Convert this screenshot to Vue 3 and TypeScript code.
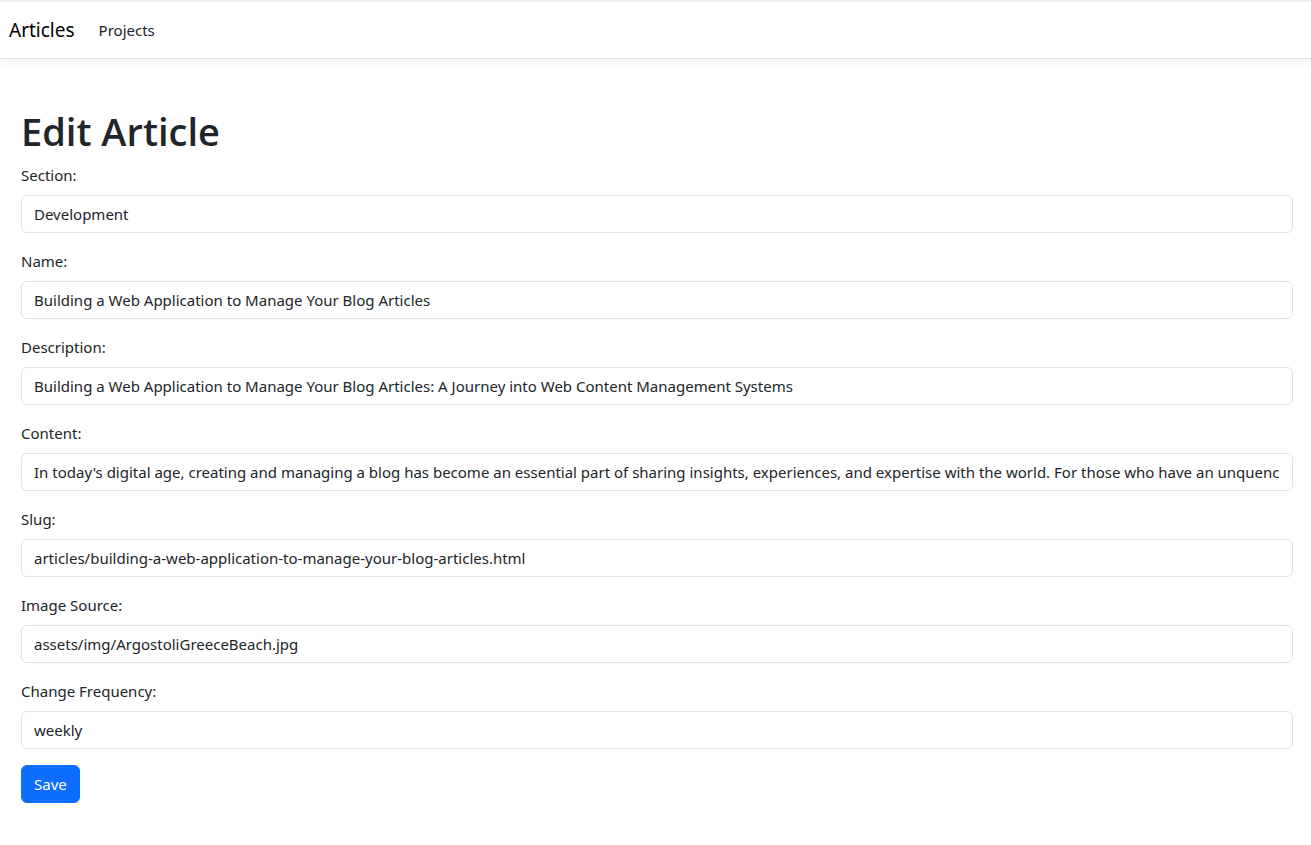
<script setup lang="ts">
import { ref } from 'vue'

interface Field {
  id: string
  label: string
  value: string
}

const fields = ref<Field[]>([
  { id: 'section', label: 'Section:', value: 'Development' },
  { id: 'name', label: 'Name:', value: 'Building a Web Application to Manage Your Blog Articles' },
  {
    id: 'description',
    label: 'Description:',
    value: 'Building a Web Application to Manage Your Blog Articles: A Journey into Web Content Management Systems',
  },
  {
    id: 'content',
    label: 'Content:',
    value:
      "In today's digital age, creating and managing a blog has become an essential part of sharing insights, experiences, and expertise with the world. For those who have an unquenchable",
  },
  { id: 'slug', label: 'Slug:', value: 'articles/building-a-web-application-to-manage-your-blog-articles.html' },
  { id: 'image', label: 'Image Source:', value: 'assets/img/ArgostoliGreeceBeach.jpg' },
  { id: 'frequency', label: 'Change Frequency:', value: 'weekly' },
])
</script>

<template>
  <header class="header">
    <nav class="navbar">
      <a class="brand" href="#">Articles</a>
      <a class="nav-link" href="#">Projects</a>
    </nav>
  </header>
  <main class="content">
    <h1 class="title">Edit Article</h1>
    <form class="form" @submit.prevent>
      <div v-for="field in fields" :key="field.id" class="group">
        <label class="label" :for="field.id">{{ field.label }}</label>
        <input :id="field.id" v-model="field.value" class="control" type="text" />
      </div>
      <button class="save" type="submit">Save</button>
    </form>
  </main>
</template>

<style>
body {
  margin: 0;
  background: #fff;
}
</style>

<style scoped>
.header,
.content {
  font-family: "Segoe UI", "Noto Sans", "Open Sans", sans-serif;
  font-size: 15px;
  line-height: 24px;
  color: #212529;
}
.header {
  border-top: 2px solid #ececec;
  border-bottom: 1px solid #dee0e2;
  box-shadow: 0 4px 12px rgba(0, 0, 0, 0.05);
}
.navbar {
  display: flex;
  align-items: center;
  gap: 24px;
  height: 56px;
  padding: 0 9px;
}
.brand {
  font-size: 19px;
  color: #000;
  text-decoration: none;
}
.nav-link {
  color: #212529;
  text-decoration: none;
}
.content {
  padding: 48px 18px 24px 21px;
}
.title {
  margin: 0 0 8px;
  font-family: "Segoe UI", "Open Sans", "Noto Sans", sans-serif;
  font-size: 38px;
  font-weight: 600;
  line-height: 48px;
}
.group {
  margin-bottom: 16px;
}
.label {
  display: block;
  margin-bottom: 8px;
}
.control {
  display: block;
  box-sizing: border-box;
  width: 100%;
  height: 38px;
  padding: 6px 12px;
  border: 1px solid #dee2e6;
  border-radius: 6px;
  background: #fff;
  color: #212529;
  font: inherit;
}
.save {
  height: 38px;
  padding: 6px 12px;
  border: 1px solid #0d6efd;
  border-radius: 6px;
  background: #0d6efd;
  color: #fff;
  font: inherit;
  cursor: pointer;
}
</style>
